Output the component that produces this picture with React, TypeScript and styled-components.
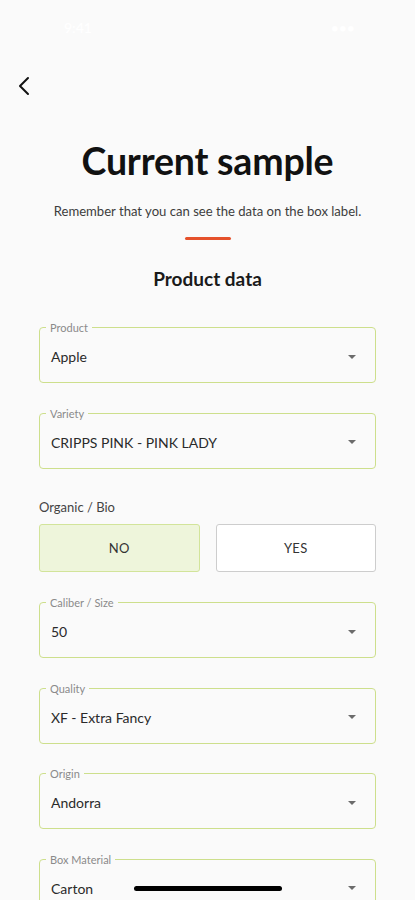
import React, { useState } from 'react'
import styled, { createGlobalStyle } from 'styled-components'

const GlobalStyle = createGlobalStyle`
  html, body {
    margin: 0;
    padding: 0;
    background: #fafafa;
    font-family: Lato, 'Open Sans', 'Liberation Sans', sans-serif;
  }
`

const Screen = styled.div`
  width: 415px;
  height: 900px;
  overflow: hidden;
  position: relative;
  background: #fafafa;
  color: #1a1a1a;
`

const StatusBar = styled.div`
  height: 54px;
  display: flex;
  align-items: center;
  justify-content: space-between;
  padding: 0 60px 0 64px;
  color: #ffffff;
  font-size: 14px;
  font-weight: 600;
`

const NavBar = styled.div`
  height: 60px;
  display: flex;
  align-items: flex-start;
  padding: 20px 0 0 14px;
  box-sizing: border-box;
`

const BackButton = styled.button`
  border: none;
  background: none;
  padding: 0;
  width: 20px;
  height: 24px;
  display: flex;
  align-items: center;
  justify-content: center;
  cursor: pointer;
`

const Header = styled.div`
  display: flex;
  flex-direction: column;
  align-items: center;
  padding-top: 25px;
`

const Title = styled.h1`
  margin: 0;
  font-size: 37.5px;
  font-weight: 700;
  line-height: 44px;
  letter-spacing: -0.2px;
  color: #111;
`

const Subtitle = styled.p`
  margin: 20px 0 0;
  font-size: 13.1px;
  line-height: 16px;
  color: #3d3d3d;
`

const Accent = styled.div`
  width: 46px;
  height: 3px;
  border-radius: 2px;
  background: #e5512b;
  margin-top: 18px;
`

const SectionTitle = styled.h2`
  margin: 27px 0 0;
  font-size: 19px;
  font-weight: 700;
  line-height: 24px;
  color: #1a1a1a;
`

const Form = styled.div`
  display: flex;
  flex-direction: column;
  gap: 23.5px;
  padding: 30px 39px 0;
`

const Field = styled.fieldset`
  margin: 0;
  padding: 0 12px 0 11px;
  border: 1.5px solid #cddf8c;
  border-radius: 4px;
  min-width: 0;
`

const Legend = styled.legend`
  font-size: 11px;
  color: #8a8a8a;
  padding: 0 4px;
  margin-left: -5px;
  line-height: 13px;
`

const FieldRow = styled.div`
  height: 48px;
  display: flex;
  align-items: center;
  justify-content: space-between;
  padding-bottom: 3px;
  box-sizing: border-box;
`

const Value = styled.span`
  font-size: 14px;
  color: #2a2a2a;
`

const Caret = styled.span`
  width: 0;
  height: 0;
  border-left: 4.5px solid transparent;
  border-right: 4.5px solid transparent;
  border-top: 4.5px solid #6b6b6b;
  margin-right: 7px;
`

const ToggleGroup = styled.div`
  display: flex;
  flex-direction: column;
  gap: 9px;
  margin: 6.5px 0 1px;
`

const ToggleLabel = styled.div`
  font-size: 13px;
  color: #444;
  line-height: 16px;
`

const ToggleRow = styled.div`
  display: grid;
  grid-template-columns: 1fr 1fr;
  gap: 16px;
`

const ToggleButton = styled.button<{ $active?: boolean }>`
  height: 48px;
  border-radius: 3px;
  font-family: inherit;
  font-size: 13px;
  color: #333;
  letter-spacing: 0.3px;
  cursor: pointer;
  background: ${(p) => (p.$active ? '#eef5db' : '#ffffff')};
  border: 1.5px solid ${(p) => (p.$active ? '#d2e49a' : '#cdcdcd')};
`

const HomeIndicator = styled.div`
  position: absolute;
  left: 134px;
  bottom: 9px;
  width: 148px;
  height: 5px;
  border-radius: 3px;
  background: #000;
`

const SelectField = ({ label, value }: { label: string; value: string }) => (
  <Field>
    <Legend>{label}</Legend>
    <FieldRow>
      <Value>{value}</Value>
      <Caret />
    </FieldRow>
  </Field>
)

const App: React.FC = () => {
  const [organic, setOrganic] = useState(false)

  return (
    <Screen>
      <GlobalStyle />
      <StatusBar>
        <span>9:41</span>
        <span>•••</span>
      </StatusBar>
      <NavBar>
        <BackButton aria-label="Back">
          <svg width="14" height="22" viewBox="0 0 14 22" fill="none">
            <path
              d="M11 3L3 11l8 8"
              stroke="#111"
              strokeWidth="2"
              strokeLinecap="round"
              strokeLinejoin="round"
            />
          </svg>
        </BackButton>
      </NavBar>
      <Header>
        <Title>Current sample</Title>
        <Subtitle>Remember that you can see the data on the box label.</Subtitle>
        <Accent />
        <SectionTitle>Product data</SectionTitle>
      </Header>
      <Form>
        <SelectField label="Product" value="Apple" />
        <SelectField label="Variety" value="CRIPPS PINK - PINK LADY" />
        <ToggleGroup>
          <ToggleLabel>Organic / Bio</ToggleLabel>
          <ToggleRow>
            <ToggleButton $active={!organic} onClick={() => setOrganic(false)}>
              NO
            </ToggleButton>
            <ToggleButton $active={organic} onClick={() => setOrganic(true)}>
              YES
            </ToggleButton>
          </ToggleRow>
        </ToggleGroup>
        <SelectField label="Caliber / Size" value="50" />
        <SelectField label="Quality" value="XF - Extra Fancy" />
        <SelectField label="Origin" value="Andorra" />
        <SelectField label="Box Material" value="Carton" />
      </Form>
      <HomeIndicator />
    </Screen>
  )
}

export default App
